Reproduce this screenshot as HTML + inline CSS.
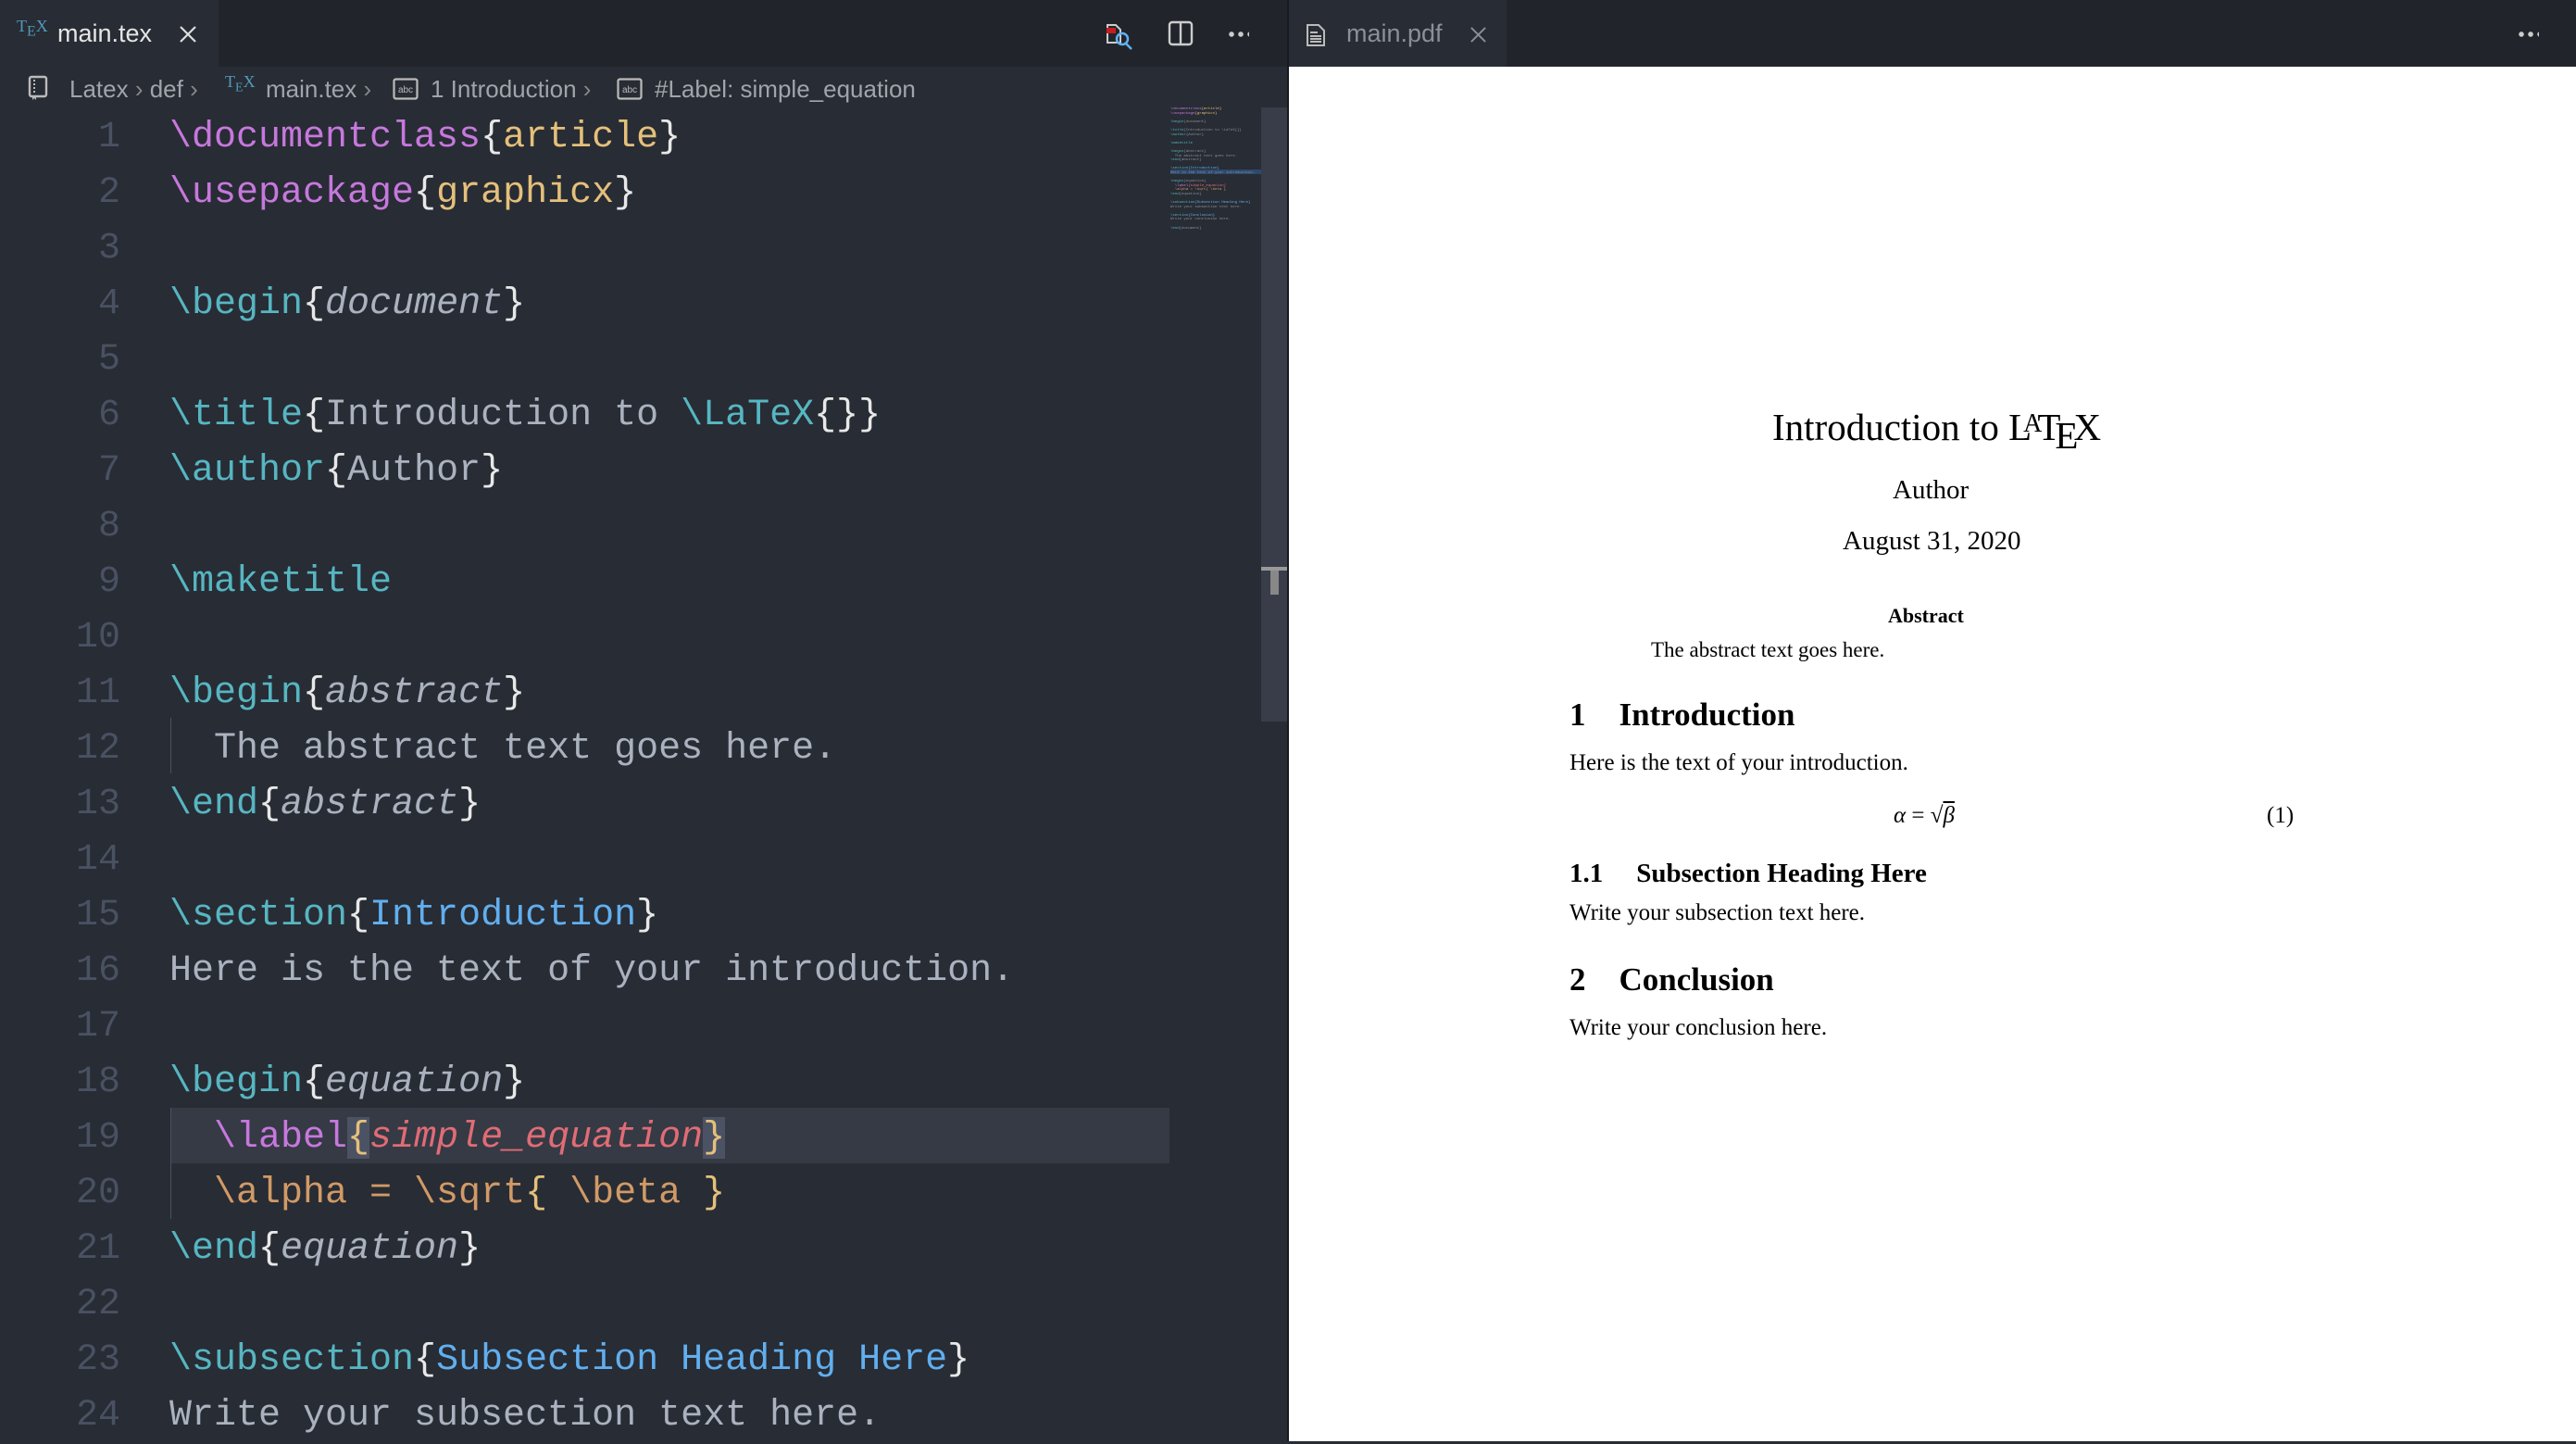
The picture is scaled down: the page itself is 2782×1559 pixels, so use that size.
<!DOCTYPE html>
<html><head><meta charset="utf-8"><style>
*{margin:0;padding:0;box-sizing:border-box}
body{width:2782px;height:1556px;overflow:hidden;background:#282c34;position:relative;font-family:"Liberation Sans",sans-serif}
.abs{position:absolute}
.tabbar{left:0;top:0;width:1390px;height:72px;background:#21252b}
.tabbar2{left:1392px;top:0;width:1390px;height:72px;background:#21252b}
.tab{top:0;height:72px;background:#282c34}
.ttxt{font-size:27px;line-height:72px;white-space:nowrap}
.tex{font-family:"Liberation Serif",serif;color:#519aba;font-size:18px}
.bc{top:76px;left:0;height:40px;font-size:26px;color:#a0a4ab;line-height:40px;white-space:nowrap}
.ln{position:absolute;left:0;width:130px;text-align:right;font-family:"Liberation Mono",monospace;font-size:40px;line-height:60px;color:#495162;margin-top:4px}
.cl{position:absolute;left:183px;font-family:"Liberation Mono",monospace;font-size:40px;line-height:60px;color:#abb2bf;white-space:pre;margin-top:4px}
.p{color:#c678dd}.y{color:#e5c07b}.c{color:#56b6c2}.b{color:#61afef}.r{color:#e06c75;font-style:italic}.o{color:#d19a66}.w{color:#e8e8e8}.i{font-style:italic}
.pdf{left:1392px;top:72px;width:1390px;height:1484px;background:#fff}
.pt{position:absolute;font-family:"Liberation Serif",serif;color:#000;white-space:nowrap}
</style></head><body>
<div class="abs tabbar"></div>
<div class="abs tab" style="left:0;width:236px"></div>
<div class="abs ttxt tex" style="left:18px;top:-8px">T<sub style="font-size:16px">E</sub>X</div>
<div class="abs ttxt" style="left:62px;top:0;color:#e6e6e6">main.tex</div>
<svg class="abs" style="left:193px;top:27px" width="20" height="20" viewBox="0 0 20 20"><path d="M2 2L18 18M18 2L2 18" stroke="#ddd" stroke-width="2.2"/></svg>
<svg class="abs" style="left:1192px;top:22px" width="36" height="34" viewBox="0 0 36 34"><path d="M4 5h9l5 5v14H4z" fill="none" stroke="#ccc" stroke-width="2"/><rect x="3" y="8" width="10" height="6" fill="#c41e1e"/><circle cx="20" cy="20" r="6" fill="none" stroke="#5fb2f0" stroke-width="2.5"/><path d="M24 25l6 6" stroke="#5fb2f0" stroke-width="2.5"/></svg>
<svg class="abs" style="left:1261px;top:22px" width="28" height="28" viewBox="0 0 28 28"><rect x="2" y="2" width="24" height="24" rx="3" fill="none" stroke="#ccc" stroke-width="2.4"/><path d="M14 2v24" stroke="#ccc" stroke-width="2.4"/></svg>
<div class="abs" style="left:1325px;top:34px;width:24px;height:6px;background:radial-gradient(circle,#ccc 2.5px,transparent 3px) 0 0/10px 6px repeat-x"></div>
<div class="abs" style="left:1390px;top:0;width:2px;height:1556px;background:#181a1f"></div>
<div class="abs tabbar2"></div>
<div class="abs tab" style="left:1392px;width:235px"></div>
<svg class="abs" style="left:1410px;top:26px" width="22" height="24" viewBox="0 0 22 24"><path d="M2 1h12l6 6v16H2z" fill="none" stroke="#bbb" stroke-width="2"/><path d="M5 9h8M5 13h12M5 16h12M5 19h12" stroke="#bbb" stroke-width="2"/></svg>
<div class="abs ttxt" style="left:1454px;top:0;color:#8b8f96">main.pdf</div>
<svg class="abs" style="left:1587px;top:28px" width="19" height="19" viewBox="0 0 20 20"><path d="M2 2L18 18M18 2L2 18" stroke="#8b8f96" stroke-width="2"/></svg>
<div class="abs" style="left:2718px;top:34px;width:24px;height:6px;background:radial-gradient(circle,#ccc 2.5px,transparent 3px) 0 0/10px 6px repeat-x"></div>

<div class="abs bc" style="left:30px">
<svg style="position:absolute;left:0;top:5px" width="22" height="28" viewBox="0 0 22 28"><rect x="2" y="2" width="18" height="21" rx="2" fill="none" stroke="#bbb" stroke-width="2.4"/><path d="M7 5v14" stroke="#bbb" stroke-width="2" stroke-dasharray="2 2"/><path d="M5 23v4l2-2 2 2v-4" fill="#bbb"/></svg>
<span style="position:absolute;left:45px">Latex <span style="color:#888">›</span> def <span style="color:#888">›</span></span>
<span class="tex" style="position:absolute;left:213px;top:-8px">T<sub style="font-size:14px">E</sub>X</span>
<span style="position:absolute;left:257px">main.tex <span style="color:#888">›</span></span>
<svg style="position:absolute;left:394px;top:8px" width="28" height="24" viewBox="0 0 28 24"><rect x="1.5" y="1.5" width="25" height="21" rx="2" fill="none" stroke="#bbb" stroke-width="2.2"/><text x="14" y="16" font-size="10" fill="#bbb" text-anchor="middle" font-family="Liberation Sans">abc</text></svg>
<span style="position:absolute;left:435px">1 Introduction <span style="color:#888">›</span></span>
<svg style="position:absolute;left:636px;top:8px" width="28" height="24" viewBox="0 0 28 24"><rect x="1.5" y="1.5" width="25" height="21" rx="2" fill="none" stroke="#bbb" stroke-width="2.2"/><text x="14" y="16" font-size="10" fill="#bbb" text-anchor="middle" font-family="Liberation Sans">abc</text></svg>
<span style="position:absolute;left:677px">#Label: simple_equation</span>
</div>

<div class="abs" style="left:184px;top:1196px;width:1079px;height:60px;background:#353a45"></div>
<div class="abs" style="left:184px;top:775px;width:1px;height:60px;background:#4b5160"></div>
<div class="abs" style="left:184px;top:1196px;width:1px;height:120px;background:#4b5160"></div>
<div class="abs" style="left:1362px;top:116px;width:28px;height:663px;background:#383d49"></div>
<div class="abs" style="left:1362px;top:612px;width:28px;height:4px;background:#999"></div>
<div class="abs" style="left:1372px;top:616px;width:9px;height:26px;background:#888"></div>
<div class="abs" style="left:1264px;top:183px;width:98px;height:5px;background:#2d4a6e"></div>
<div class="abs" style="left:1264px;top:116px;font-family:'Liberation Mono',monospace;font-size:4px;line-height:4.6px;color:#8a8f99;white-space:pre"><span class="p">\documentclass</span><span class="y">{article}</span>
<span class="p">\usepackage</span><span class="y">{graphicx}</span>

<span class="c">\begin</span>{document}

<span class="c">\title</span>{Introduction to \LaTeX{}}
<span class="c">\author</span>{Author}

<span class="c">\maketitle</span>

<span class="c">\begin</span>{abstract}
  The abstract text goes here.
<span class="c">\end</span>{abstract}

<span class="c">\section</span><span class="b">{Introduction}</span>
Here is the text of your introduction.

<span class="c">\begin</span>{equation}
  <span class="p">\label</span><span class="r">{simple_equation}</span>
  <span class="o">\alpha = \sqrt{ \beta }</span>
<span class="c">\end</span>{equation}

<span class="c">\subsection</span><span class="b">{Subsection Heading Here}</span>
Write your subsection text here.

<span class="c">\section</span><span class="b">{Conclusion}</span>
Write your conclusion here.

<span class="c">\end</span>{document}</div>

<div class="ln" style="top:115px">1</div><div class="ln" style="top:175px">2</div><div class="ln" style="top:235px">3</div><div class="ln" style="top:295px">4</div><div class="ln" style="top:355px">5</div><div class="ln" style="top:415px">6</div><div class="ln" style="top:475px">7</div><div class="ln" style="top:535px">8</div><div class="ln" style="top:595px">9</div><div class="ln" style="top:655px">10</div><div class="ln" style="top:715px">11</div><div class="ln" style="top:775px">12</div><div class="ln" style="top:835px">13</div><div class="ln" style="top:895px">14</div><div class="ln" style="top:955px">15</div><div class="ln" style="top:1015px">16</div><div class="ln" style="top:1075px">17</div><div class="ln" style="top:1135px">18</div><div class="ln" style="top:1195px">19</div><div class="ln" style="top:1255px">20</div><div class="ln" style="top:1315px">21</div><div class="ln" style="top:1375px">22</div><div class="ln" style="top:1435px">23</div><div class="ln" style="top:1495px">24</div>

<div class="cl" style="top:115px"><span class="p">\documentclass</span><span class="w">{</span><span class="y">article</span><span class="w">}</span></div>
<div class="cl" style="top:175px"><span class="p">\usepackage</span><span class="w">{</span><span class="y">graphicx</span><span class="w">}</span></div>
<div class="cl" style="top:295px"><span class="c">\begin</span><span class="w">{</span><span class="i">document</span><span class="w">}</span></div>
<div class="cl" style="top:415px"><span class="c">\title</span><span class="w">{</span>Introduction to <span class="c">\LaTeX</span><span class="w">{}}</span></div>
<div class="cl" style="top:475px"><span class="c">\author</span><span class="w">{</span>Author<span class="w">}</span></div>
<div class="cl" style="top:595px"><span class="c">\maketitle</span></div>
<div class="cl" style="top:715px"><span class="c">\begin</span><span class="w">{</span><span class="i">abstract</span><span class="w">}</span></div>
<div class="cl" style="top:775px">  The abstract text goes here.</div>
<div class="cl" style="top:835px"><span class="c">\end</span><span class="w">{</span><span class="i">abstract</span><span class="w">}</span></div>
<div class="cl" style="top:955px"><span class="c">\section</span><span class="w">{</span><span class="b">Introduction</span><span class="w">}</span></div>
<div class="cl" style="top:1015px">Here is the text of your introduction.</div>
<div class="cl" style="top:1135px"><span class="c">\begin</span><span class="w">{</span><span class="i">equation</span><span class="w">}</span></div>
<div class="cl" style="top:1195px">  <span class="p">\label</span><span class="y" style="background:#4b5263">{</span><span class="r">simple_equation</span><span class="y" style="background:#4b5263">}</span></div>
<div class="cl" style="top:1255px">  <span class="o">\alpha = \sqrt</span><span class="y">{</span> <span class="o">\beta</span> <span class="y">}</span></div>
<div class="cl" style="top:1315px"><span class="c">\end</span><span class="w">{</span><span class="i">equation</span><span class="w">}</span></div>
<div class="cl" style="top:1435px"><span class="c">\subsection</span><span class="w">{</span><span class="b">Subsection Heading Here</span><span class="w">}</span></div>
<div class="cl" style="top:1495px">Write your subsection text here.</div>

<div class="abs pdf"></div>
<div class="pt" style="left:1914px;top:437px;font-size:41px">Introduction to L<span style="font-size:28px;position:relative;top:-9px;margin-left:-9px;margin-right:-5px">A</span>T<span style="position:relative;top:9px;margin-left:-6px;margin-right:-5px">E</span>X</div>
<div class="pt" style="left:2044px;top:513px;font-size:29px">Author</div>
<div class="pt" style="left:1990px;top:568px;font-size:29px">August 31, 2020</div>
<div class="pt" style="left:2039px;top:652px;font-size:22px;font-weight:bold">Abstract</div>
<div class="pt" style="left:1783px;top:689px;font-size:23px">The abstract text goes here.</div>
<div class="pt" style="left:1695px;top:752px;font-size:35px;font-weight:bold">1<span style="margin-left:36px">Introduction</span></div>
<div class="pt" style="left:1695px;top:810px;font-size:25px">Here is the text of your introduction.</div>
<div class="pt" style="left:2045px;top:867px;font-size:25px;font-style:italic">α <span style="font-style:normal">=</span> <span style="font-style:normal">√</span><span style="text-decoration:overline">β</span></div>
<div class="pt" style="left:2448px;top:867px;font-size:25px">(1)</div>
<div class="pt" style="left:1695px;top:927px;font-size:29px;font-weight:bold">1.1<span style="margin-left:36px">Subsection Heading Here</span></div>
<div class="pt" style="left:1695px;top:972px;font-size:25px">Write your subsection text here.</div>
<div class="pt" style="left:1695px;top:1038px;font-size:35px;font-weight:bold">2<span style="margin-left:36px">Conclusion</span></div>
<div class="pt" style="left:1695px;top:1096px;font-size:25px">Write your conclusion here.</div>
</body></html>
